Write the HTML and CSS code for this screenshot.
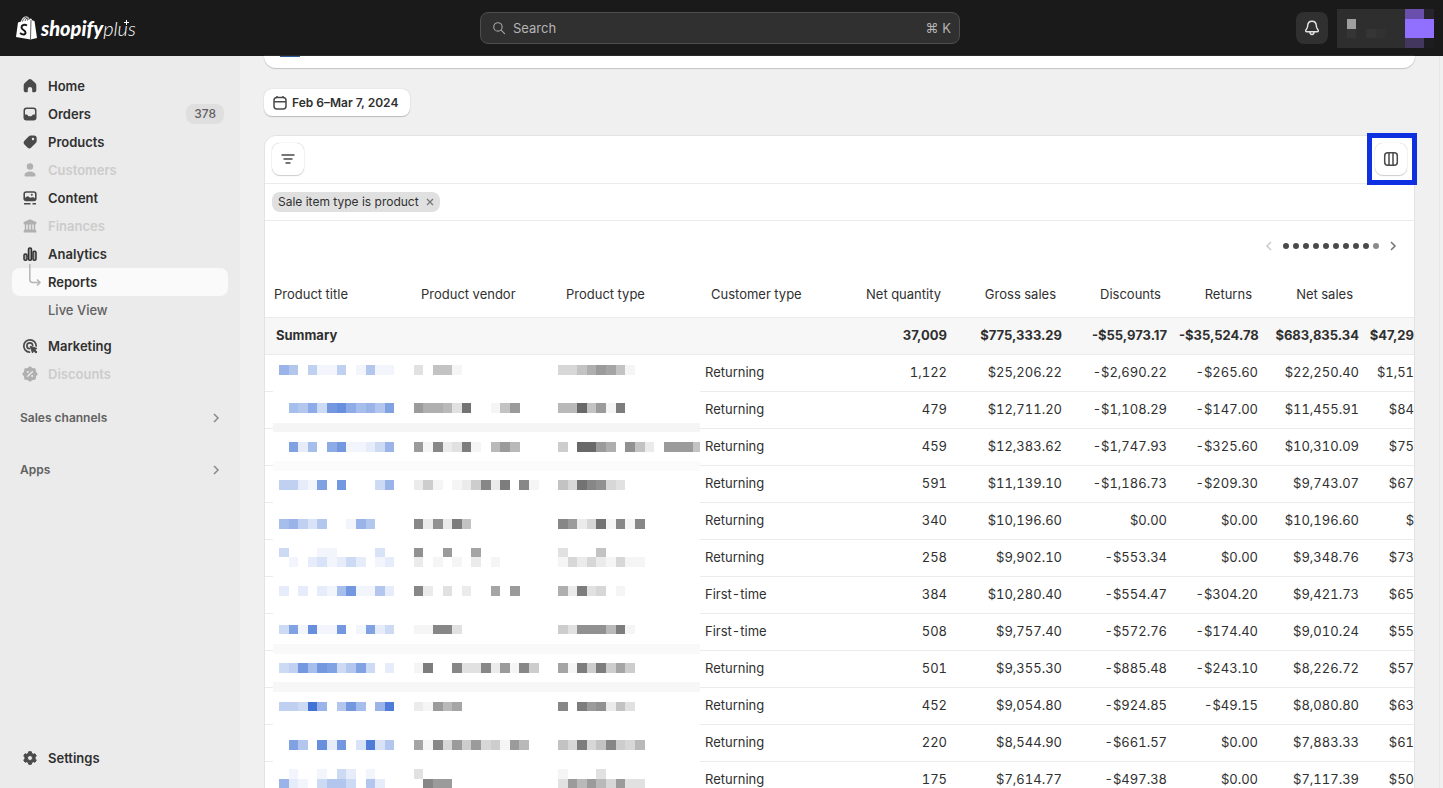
FILE: index.html
```html
<!DOCTYPE html>
<html lang="en">
<head>
<meta charset="utf-8">
<title>Reports</title>
<link rel="stylesheet" href="styles.css">
</head>
<body>
<header class="topbar">
  <a class="brand" href="#" aria-label="Shopify Plus">
    <svg class="bag" viewBox="0 0 42 48" aria-hidden="true">
      <path fill="#fff" d="M4 13 L10 11 C11 5 15 1 20 1 C23 0 26 3 27 6 L30 5 L33 9 L37 10 L42 44 L29 47 L0 42 Z"/>
      <path fill="none" stroke="#1a1a1a" stroke-width="1.6" d="M13 11 C14 6 17 3 20 3 C22 4 23 7 23 9 M18 10 C19 6 21 4 23 4 C25 5 26 7 26 8"/>
      <path fill="none" stroke="#1a1a1a" stroke-width="1.4" d="M30 8 L29 47"/>
      <path fill="none" stroke="#1a1a1a" stroke-width="4" d="M22 19 C17 16 11 18 11 23 C11 28 19 28 19 33 C19 38 13 38 8 34"/>
    </svg>
    <span class="word">shopify</span><span class="plus">plus</span><svg class="tick" viewBox="0 0 6 6" aria-hidden="true"><path d="M3 0V6M0 3H6" stroke="#fff" stroke-width="1.2"/></svg>
  </a>
  <label class="search">
    <svg viewBox="0 0 20 20" aria-hidden="true"><circle cx="8.5" cy="8.5" r="6"/><path d="M13 13L18 18"/></svg>
    <input type="search" placeholder="Search" aria-label="Search">
    <kbd>⌘ K</kbd>
  </label>
  <div class="account">
    <button class="bell" aria-label="Notifications">
      <svg viewBox="0 0 20 20" aria-hidden="true"><path d="M10 2.5C6.900 2.500 5.300 4.800 5.200 7.500C5.100 10 4.500 10.800 3.400 12C2.600 13 3 14.200 4.300 14.200H15.700C17 14.200 17.400 13 16.600 12C15.500 10.800 14.900 10 14.800 7.500C14.700 4.800 13.100 2.500 10 2.500ZM7.700 14.500C7.700 18 12.300 18 12.300 14.500"/></svg>
    </button>
    <button class="profile" aria-label="Account">
      <svg viewBox="0 0 10 4" preserveAspectRatio="none" shape-rendering="crispEdges" aria-hidden="true">
        <path fill="#2e2e2e" d="M0 0H10V4H0Z"/><path fill="#9e9e9e" d="M1 1H2V2H1Z"/>
        <path fill="#353535" d="M1 2H2V3H1ZM3 2H4V3H3Z"/><path fill="#313131" d="M4 2H5V3H4Z"/>
        <path fill="#6a50ac" d="M7 0H9V1H7Z"/><path fill="#9270ff" d="M7 1H10V3H7Z"/><path fill="#43365f" d="M7 3H9V4H7Z"/><path fill="#28242d" d="M9 0H10V1H9Z"/><path fill="#1d1c1f" d="M9 3H10V4H9Z"/>
      </svg>
    </button>
  </div>
</header>
<div class="shell">
  <nav class="sidebar" aria-label="Main">
    <ul>
      <li><a href="#"><svg viewBox="0 0 20 20" aria-hidden="true"><path d="M8.600 3.500Q10 2.300 11.400 3.500L15.500 7.300Q16.300 8.100 16.300 9.200V14.500Q16.300 16.300 14.500 16.300H13Q12.200 16.300 12.200 15.500V13Q12.200 11 10 11T7.800 13V15.500Q7.800 16.300 7 16.300H5.500Q3.700 16.300 3.700 14.500V9.200Q3.700 8.100 4.500 7.300Z"/></svg>Home</a></li>
      <li><a href="#"><svg viewBox="0 0 20 20" aria-hidden="true"><path fill-rule="evenodd" d="M6.500 3.500H13.500Q16.500 3.500 16.500 6.500V13.500Q16.500 16.500 13.500 16.500H6.500Q3.500 16.500 3.500 13.500V6.500Q3.500 3.500 6.500 3.500ZM6.700 5Q5 5 5 6.700V10.500H6.500Q7.300 10.500 7.700 11.300Q8.200 12.300 9 12.300H11Q11.800 12.300 12.300 11.300Q12.700 10.500 13.500 10.500H15V6.700Q15 5 13.300 5Z"/></svg>Orders<span class="count">378</span></a></li>
      <li><a href="#"><svg viewBox="0 0 20 20" aria-hidden="true"><path fill-rule="evenodd" d="M10.800 3.500H14Q16.700 3.500 16.700 6.200V8.800Q16.700 10 15.800 10.900L11 15.700Q9.400 17.300 7.700 15.700L4.200 12.200Q2.700 10.600 4.200 9.100L8.600 4.500Q9.600 3.500 10.800 3.500ZM13 5.800A1.200 1.200 0 1 0 13 8.200A1.200 1.200 0 1 0 13 5.800Z"/></svg>Products</a></li>
      <li><a class="off" href="#"><svg viewBox="0 0 20 20" aria-hidden="true"><circle cx="10" cy="6.500" r="3.200"/><path d="M4.500 14.800Q6 11.500 10 11.500T15.500 14.800Q15.800 16.400 14.500 16.400H5.500Q4.200 16.400 4.500 14.800Z"/></svg>Customers</a></li>
      <li><a href="#"><svg viewBox="0 0 20 20" aria-hidden="true"><path fill-rule="evenodd" d="M6.200 3.200H13.800Q16.600 3.200 16.600 6V10.500Q16.600 13.300 13.800 13.300H6.200Q3.400 13.300 3.400 10.500V6Q3.400 3.200 6.200 3.200ZM6.300 4.700Q5 4.700 5 6V9.700L7 8.400Q8 7.800 8.900 8.700L10 9.700L12.300 9.200Q13.400 9 14 9.500L15 10.200V6Q15 4.700 13.700 4.700ZM11.800 5.700A1 1 0 1 1 11.800 7.700A1 1 0 1 1 11.800 5.700Z"/><path d="M4 15H10.500V16.500H4ZM12.500 15H16V16.500H12.500Z"/></svg>Content</a></li>
      <li><a class="off" href="#"><svg viewBox="0 0 20 20" aria-hidden="true"><path d="M10 3.200L16.300 6Q16.800 8.500 15.500 8.500H4.500Q3.200 8.500 3.700 6ZM4.800 8H6.300V14H4.800ZM7.800 8H9.300V14H7.800ZM10.800 8H12.300V14H10.800ZM13.700 8H15.200V14H13.700ZM4.500 13.500H15.500Q16.700 15 16.400 16.500H3.600Q3.300 15 4.500 13.500Z"/></svg>Finances</a></li>
      <li><a class="open" href="#"><svg class="line" viewBox="0 0 20 20" aria-hidden="true"><rect x="4" y="10" width="3" height="6.200" rx="1.300"/><rect x="8.500" y="4" width="3" height="12.200" rx="1.300"/><rect x="13" y="7.200" width="3" height="9" rx="1.300"/></svg>Analytics</a></li>
      <li><a class="current" href="#" aria-current="page"><svg class="branch" viewBox="0 0 20 28" aria-hidden="true"><path d="M9.800 -4V11.500Q9.800 14.500 12.800 14.500H20M17 11.500L20 14.500L17 17.500"/></svg>Reports</a></li>
      <li><a class="sub" href="#">Live View</a></li>
      <li class="spaced"><a href="#"><svg viewBox="0 0 20 20" aria-hidden="true"><path fill="none" stroke="currentColor" stroke-width="1.700" stroke-linecap="round" d="M9.500 16.200A6.200 6.200 0 1 1 16.200 10M9.500 12.700A2.900 2.900 0 1 1 12.700 9.500"/><path d="M10.200 10.200L17 12.500L14.700 13.700L17 16L15.900 17.100L13.600 14.800L12.500 17Z" stroke="currentColor" stroke-linejoin="round"/></svg>Marketing</a></li>
      <li><a class="off" href="#"><svg viewBox="0 0 20 20" aria-hidden="true"><path d="M10 3L12.100 4.700L14.900 5.100L15.300 7.900L17 10L15.300 12.100L14.900 14.900L12.100 15.300L10 17L7.900 15.300L5.100 14.900L4.700 12.100L3 10L4.700 7.900L5.100 5.100L7.900 4.700Z" stroke="currentColor" stroke-width="1.500" stroke-linejoin="round"/><path d="M7.700 12.300L12.300 7.700" stroke="#ebebeb" stroke-width="1.400" stroke-linecap="round"/><circle cx="7.900" cy="8" r="1" fill="#ebebeb"/><circle cx="12.100" cy="12" r="1" fill="#ebebeb"/></svg>Discounts</a></li>
    </ul>
    <button class="group">Sales channels<svg viewBox="0 0 8 10" aria-hidden="true"><path d="M2 1L6 5L2 9"/></svg></button>
    <button class="group">Apps<svg viewBox="0 0 8 10" aria-hidden="true"><path d="M2 1L6 5L2 9"/></svg></button>
    <a class="settings" href="#"><svg viewBox="0 0 20 20" aria-hidden="true"><path fill-rule="evenodd" stroke="currentColor" stroke-linejoin="round" d="M8.700 3.700H11.300L11.800 5.500L13.200 6.300L15 5.800L16.300 8.100L15 9.300V10.700L16.300 11.900L15 14.200L13.200 13.700L11.800 14.500L11.300 16.300H8.700L8.200 14.500L6.800 13.700L5 14.200L3.700 11.900L5 10.700V9.300L3.700 8.100L5 5.800L6.800 6.300L8.200 5.500ZM10 7.500A2.500 2.500 0 1 0 10 12.500A2.500 2.500 0 1 0 10 7.500Z"/></svg>Settings</a>
  </nav>
  <main class="content">
    <section class="banner"><span></span></section>
    <button class="date"><svg viewBox="0 0 16 16" aria-hidden="true"><rect x="2" y="2.500" width="12" height="11.500" rx="3"/><path d="M2 6.700H14M5 1V3M11 1V3"/></svg>Feb 6–Mar 7, 2024</button>
    <section class="card">
      <div class="toolbar">
        <button class="tool" aria-label="Filter"><svg viewBox="0 0 16 16" aria-hidden="true"><path d="M1.500 4H14.500M3.500 8H12.500M5.500 12H10.500"/></svg></button>
        <div class="marked"><button class="tool" aria-label="Columns"><svg viewBox="0 0 16 16" aria-hidden="true"><rect x="1.700" y="1.700" width="12.600" height="12.600" rx="3"/><path d="M6 2V14M10 2V14"/></svg></button></div>
      </div>
      <div class="filters"><span class="chip">Sale item type is product<button aria-label="Remove filter"><svg viewBox="0 0 8 8" aria-hidden="true"><path d="M1 1L7 7M7 1L1 7"/></svg></button></span></div>
      <div class="pager">
        <button class="dim" aria-label="Previous columns"><svg viewBox="0 0 8 10" aria-hidden="true"><path d="M6 1L2 5L6 9"/></svg></button>
        <span class="dots"><i></i><i></i><i></i><i></i><i></i><i></i><i></i><i></i><i></i><i></i></span>
        <button aria-label="Next columns"><svg viewBox="0 0 8 10" aria-hidden="true"><path d="M2 1L6 5L2 9"/></svg></button>
      </div>
      <div class="report">
        <table>
          <colgroup><col class="c-title"><col class="c-vendor"><col class="c-type"><col><col class="c-qty"><col class="c-gross"><col class="c-disc"><col class="c-ret"><col class="c-net"><col class="c-cut"></colgroup>
          <thead><tr><th>Product title</th><th>Product vendor</th><th>Product type</th><th>Customer type</th><th>Net quantity</th><th>Gross sales</th><th>Discounts</th><th>Returns</th><th>Net sales</th><td></td></tr></thead>
          <tbody>
            <tr class="sum"><th colspan="4">Summary</th><td>37,009</td><td>$775,333.29</td><td>-$55,973.17</td><td>-$35,524.78</td><td>$683,835.34</td><td>$47,29</td></tr>
            <tr><td></td><td></td><td></td><td>Returning</td><td>1,122</td><td>$25,206.22</td><td>-$2,690.22</td><td>-$265.60</td><td>$22,250.40</td><td>$1,51</td></tr>
            <tr><td></td><td></td><td></td><td>Returning</td><td>479</td><td>$12,711.20</td><td>-$1,108.29</td><td>-$147.00</td><td>$11,455.91</td><td>$84</td></tr>
            <tr><td></td><td></td><td></td><td>Returning</td><td>459</td><td>$12,383.62</td><td>-$1,747.93</td><td>-$325.60</td><td>$10,310.09</td><td>$75</td></tr>
            <tr><td></td><td></td><td></td><td>Returning</td><td>591</td><td>$11,139.10</td><td>-$1,186.73</td><td>-$209.30</td><td>$9,743.07</td><td>$67</td></tr>
            <tr><td></td><td></td><td></td><td>Returning</td><td>340</td><td>$10,196.60</td><td>$0.00</td><td>$0.00</td><td>$10,196.60</td><td>$</td></tr>
            <tr><td></td><td></td><td></td><td>Returning</td><td>258</td><td>$9,902.10</td><td>-$553.34</td><td>$0.00</td><td>$9,348.76</td><td>$73</td></tr>
            <tr><td></td><td></td><td></td><td>First-time</td><td>384</td><td>$10,280.40</td><td>-$554.47</td><td>-$304.20</td><td>$9,421.73</td><td>$65</td></tr>
            <tr><td></td><td></td><td></td><td>First-time</td><td>508</td><td>$9,757.40</td><td>-$572.76</td><td>-$174.40</td><td>$9,010.24</td><td>$55</td></tr>
            <tr><td></td><td></td><td></td><td>Returning</td><td>501</td><td>$9,355.30</td><td>-$885.48</td><td>-$243.10</td><td>$8,226.72</td><td>$57</td></tr>
            <tr><td></td><td></td><td></td><td>Returning</td><td>452</td><td>$9,054.80</td><td>-$924.85</td><td>-$49.15</td><td>$8,080.80</td><td>$63</td></tr>
            <tr><td></td><td></td><td></td><td>Returning</td><td>220</td><td>$8,544.90</td><td>-$661.57</td><td>$0.00</td><td>$7,883.33</td><td>$61</td></tr>
            <tr><td></td><td></td><td></td><td>Returning</td><td>175</td><td>$7,614.77</td><td>-$497.38</td><td>$0.00</td><td>$7,117.39</td><td>$50</td></tr>
          </tbody>
        </table>
        <svg class="mosaic" viewBox="0 0 427 433" aria-hidden="true"></svg>
      </div>
    </section>
  </main>
</div>
<script src="mosaic.js"></script>
</body>
</html>
```
FILE: styles.css
```css
* { box-sizing: border-box; }
body {
  margin: 0;
  height: 100vh;
  overflow: hidden;
  display: flex;
  flex-direction: column;
  background: #f0f0f0;
  color: #303030;
  font: 13px/20px Inter, "Liberation Sans", sans-serif;
}
button { font: inherit; color: inherit; border: 0; background: none; padding: 0; cursor: pointer; }
a { color: inherit; text-decoration: none; }
svg { display: block; flex: none; }

.topbar {
  flex: none;
  height: 56px;
  padding-right: 3px;
  display: grid;
  grid-template-columns: 1fr 480px 1fr;
  align-items: center;
  background: #1a1a1a;
  color: #fff;
}
.brand { position: relative; display: flex; align-items: center; justify-self: start; margin-left: 16px; font: italic 20px/24px Lato, sans-serif; }
.bag { width: 21px; height: 24px; margin-right: 4px; }
.word { font-weight: 900; }
.plus { font-weight: 300; }
.tick { position: absolute; width: 5px; height: 5px; right: 7px; top: 4px; }
.search {
  height: 32px;
  display: flex;
  align-items: center;
  gap: 7px;
  padding: 0 8px 0 11px;
  border: 1px solid #4d4d4d;
  border-radius: 8px;
  background: #303030;
  color: #b5b5b5;
}
.search svg { width: 14px; height: 14px; fill: none; stroke: #a5a5a5; stroke-width: 1.6; stroke-linecap: round; }
.search input { flex: 1; min-width: 0; border: 0; padding: 0; background: none; outline: 0; color: #fff; font: inherit; }
.search input::placeholder { color: #b5b5b5; opacity: 1; }
.search kbd { font: inherit; }
.account { display: flex; align-items: center; gap: 9px; justify-self: end; margin-right: 6px; }
.bell { width: 32px; height: 32px; border-radius: 8px; background: #303030; display: grid; place-items: center; }
.bell svg { width: 18px; height: 18px; fill: none; stroke: #e3e3e3; stroke-width: 1.6; }
.profile svg { width: 97px; height: 39px; }

.shell { flex: 1; min-height: 0; display: flex; }
.sidebar {
  flex: none;
  width: 240px;
  padding: 16px 12px;
  display: flex;
  flex-direction: column;
  background: #ebebeb;
  font-weight: 600;
}
.sidebar ul { list-style: none; margin: 0; padding: 0; }
.sidebar a { display: flex; align-items: center; gap: 8px; height: 28px; padding: 0 4px 0 8px; border-radius: 8px; }
.sidebar a svg { width: 20px; height: 20px; fill: #4a4a4a; color: #4a4a4a; }
.sidebar a.off { color: #ccc; }
.sidebar a.off svg { fill: #b0b0b0; color: #b0b0b0; }
.sidebar a svg.line { fill: #aaa; stroke: #303030; stroke-width: 1.5; }
.sidebar a.current { background: #fafafa; }
.sidebar a svg.branch { height: 28px; fill: none; stroke: #b5b5b5; stroke-width: 1.5; overflow: visible; }
.sidebar a.sub { padding-left: 36px; font-weight: 450; color: #616161; }
.sidebar .spaced { margin-top: 8px; }
.count { margin-left: auto; padding: 0 8px; border-radius: 8px; background: #dfdfdf; color: #616161; font-weight: 500; font-size: 12px; }
.group { display: flex; align-items: center; justify-content: space-between; margin-top: 16px; padding: 0 8px; height: 28px; color: #616161; font-weight: 600; font-size: 12px; }
.group + .group { margin-top: 24px; }
.group svg { width: 8px; height: 10px; fill: none; stroke: #8a8a8a; stroke-width: 1.5; }
.settings { margin-top: auto; }

.content {
  flex: 1;
  min-width: 0;
  margin-right: 3px;
  padding: 0 24px;
  border-right: 1px solid #e6e6e6;
  display: flex;
  flex-direction: column;
  align-items: stretch;
}
.banner {
  flex: none;
  height: 12px;
  padding-left: 16px;
  margin-bottom: 21px;
  background: #fff;
  border-radius: 0 0 12px 12px;
  box-shadow: 0 1px 1px #c4c4c4, 0 0 1px #bbb;
}
.banner span { display: block; width: 20px; height: 1px; background: #2c5c9c; }
.date {
  align-self: flex-start;
  flex: none;
  display: flex;
  align-items: center;
  gap: 4px;
  height: 27px;
  padding: 0 12px 0 8px;
  margin-bottom: 19px;
  border-radius: 8px;
  background: #fff;
  box-shadow: 0 1px 1px #bbb, 0 0 1px #bbb;
  font-weight: 600;
  font-size: 12px;
}
.date svg { width: 16px; height: 16px; fill: none; stroke: #4a4a4a; stroke-width: 1.5; }
.card { flex: none; background: #fff; border: 1px solid #e3e3e3; border-radius: 12px 12px 0 0; }
.toolbar { display: flex; justify-content: space-between; align-items: center; height: 48px; padding: 0 7px 2px; border-bottom: 1px solid #ebebeb; }
.tool { width: 32px; height: 32px; display: grid; place-items: center; border-radius: 8px; background: #fff; box-shadow: 0 1px 1px #ccc, 0 0 1px #aaa; }
.tool svg { width: 16px; height: 16px; fill: none; stroke: #4a4a4a; stroke-width: 1.5; }
.marked { position: relative; }
.marked::after { content: ""; position: absolute; inset: -10px -10px -10px -8px; border: 5px solid #0f30e0; pointer-events: none; }
.filters { display: flex; align-items: center; height: 37px; padding: 0 7px; border-bottom: 1px solid #ebebeb; }
.chip { display: flex; align-items: center; gap: 7px; height: 20px; padding: 0 6px; border-radius: 8px; background: #e0e0e0; font-size: 12px; }
.chip svg { width: 8px; height: 8px; fill: none; stroke: #777; stroke-width: 1.3; }
.pager { display: flex; justify-content: flex-end; align-items: center; gap: 10px; height: 50px; padding: 0 17px; }
.pager svg { width: 8px; height: 10px; fill: none; stroke: #777; stroke-width: 1.6; }
.pager .dim svg { stroke: #ccc; }
.dots { display: flex; gap: 4px; }
.dots i { width: 6px; height: 6px; border-radius: 3px; background: #4a4a4a; }
.dots i:last-child { background: #8a8a8a; }

.report { position: relative; overflow: hidden; }
table { width: 100%; table-layout: fixed; border-collapse: collapse; font-variant-numeric: tabular-nums; }
.c-title { width: 144px; }
.c-vendor, .c-type { width: 145px; }
.c-qty, .c-gross { width: 115px; }
.c-disc { width: 105px; }
.c-ret { width: 91px; }
.c-net { width: 101px; }
.c-cut { width: 49px; }
th, td { padding: 0 6px 2px; height: 37px; border-bottom: 1px solid #ebebeb; text-align: right; font-weight: 400; white-space: nowrap; }
thead th, thead td { height: 46px; padding: 0 12px; }
th:nth-child(-n+4), tr:not(.sum) td:nth-child(4) { text-align: left; }
thead th:first-child { padding-left: 9px; }
tbody td:last-child { padding-left: 0; padding-right: 0; }
tbody .sum th, tbody .sum td { background: #f7f7f7; font-weight: 650; font-variant-numeric: normal; text-align: right; }
tbody .sum th:first-child { text-align: left; padding-left: 11px; }
.mosaic { position: absolute; left: 8px; top: 84px; width: 427px; height: 433px; }
```
FILE: mosaic.js
```js
// Draws the pixelated product cells. Each row: line, then shade digits for title, vendor and type.
const rows = [
  [0, "860511501611", "30661", "4468a961"],
  [4, "07694bc9786a", "a8873e0016a", "77f6a1d"],
  [8, "0a2709b11248", "a1c23d107a7", "50ffa80b620aaa6"],
  [12, "5521a0b00048", "2510125c2d0c1", "64ecb43"],
  [16, "7853600186", "c2b2d6", "ca24e1c1c"],
  [19, "40001100003", "b00a009", "30006"],
  [20, "010231242012", "201010201", "142421411"],
  [23, "2020217b1162", "c203020090a", "82d3401"],
  [27, "4a1c11b01a24", "11cc3", "53bbb7d1"],
  [31, "45b7ba46a402", "1d00c33c2a1c5", "91d5d595"],
  [35, "554f806b708e", "21a79", "c0dab263"],
  [39, "0a60c2b03e36", "91c4a5a451a7", "64d46c547"],
  [42, "0100104201", "3", "10003"],
  [43, "82104664062", "0caa", "3a7a74a33"]
];
const cell = 9.62;
const svg = document.querySelector(".mosaic");
function box(x, y, w, h, fill) {
  const r = document.createElementNS("http://www.w3.org/2000/svg", "rect");
  const left = Math.round(x), top = Math.round(y);
  r.setAttribute("x", left);
  r.setAttribute("y", top);
  r.setAttribute("width", Math.round(x + w) - left);
  r.setAttribute("height", Math.round(y + h) - top);
  r.setAttribute("fill", fill);
  svg.append(r);
}
box(0, 0, 427, 433, "#fff");
[[6, "#f5f5f5"], [10, "#fbfbfb"], [29, "#f9f9f9"], [33, "#f7f7f7"]].forEach(([y, c]) => box(0, 10 + y * cell, 427, cell, c));
rows.forEach(([y, ...parts]) => parts.forEach((digits, p) => {
  [...digits].forEach((d, i) => {
    const n = parseInt(d, 16);
    if (!n) return;
    const g = 255 - n * 10;
    const t = n / 15;
    const fill = p ? `rgb(${g},${g},${g})` : `rgb(${Math.round(255 - 190 * t)},${Math.round(255 - 140 * t)},${Math.round(255 - 42 * t)})`;
    box(6 + ([0, 14, 29][p] + i) * cell, 10 + y * cell, cell, cell, fill);
  });
}));
```
